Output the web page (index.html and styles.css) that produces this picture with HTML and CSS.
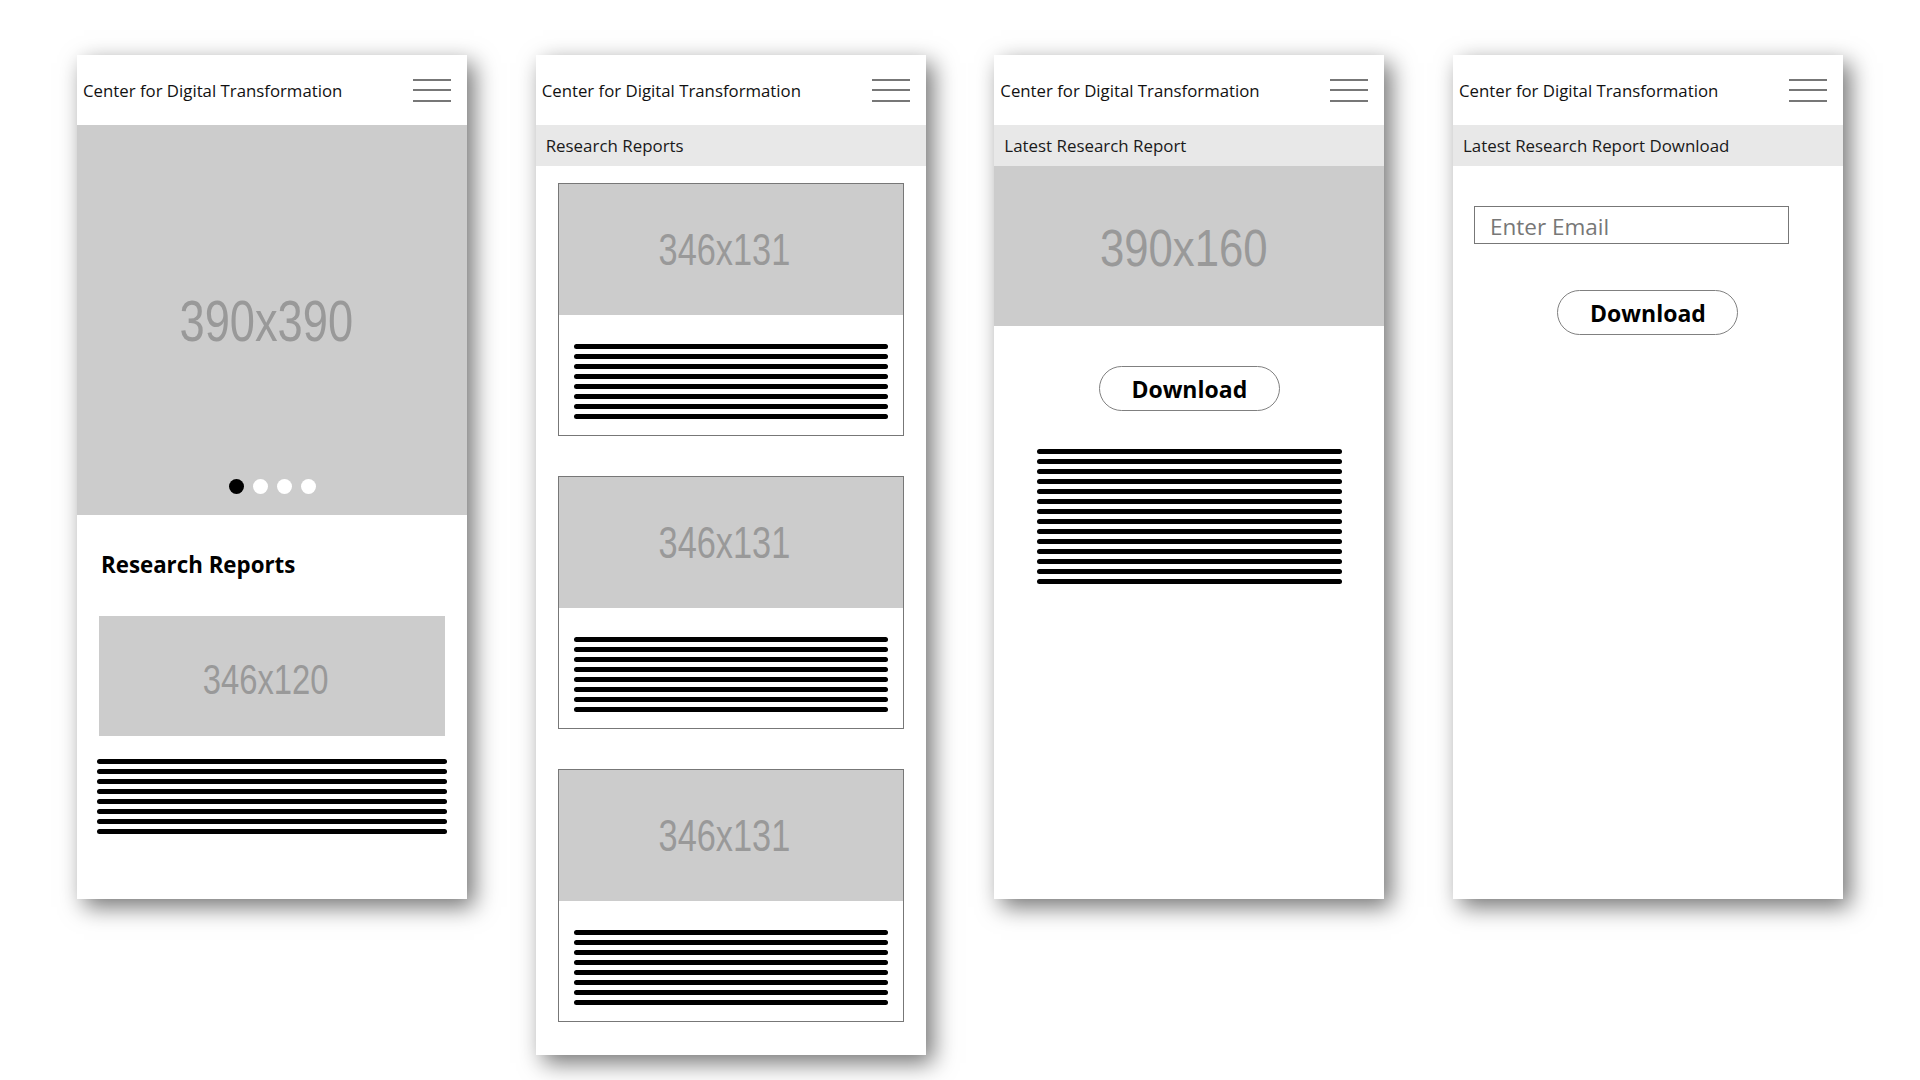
FILE: index.html
```html
<!DOCTYPE html>
<html lang="en">
<head>
    <meta charset="UTF-8">
    <meta name="viewport" content="width=device-width, initial-scale=1.0">
    <title>Center for Digital Transformation - Wireframes</title>
    <link rel="stylesheet" href="styles.css">
</head>
<body>
    <div class="board">

        <!-- home -->
        <div class="phone">
            <div class="topbar">
                <span class="brand">Center for Digital Transformation</span>
                <div class="menu"><span></span><span></span><span></span></div>
            </div>
            <div class="placeholder hero">
                <span class="ph-label size-xl">390x390</span>
                <div class="dots">
                    <span class="dot active"></span>
                    <span class="dot"></span>
                    <span class="dot"></span>
                    <span class="dot"></span>
                </div>
            </div>
            <h2 class="section-title">Research Reports</h2>
            <div class="placeholder teaser">
                <span class="ph-label size-s">346x120</span>
            </div>
            <div class="lines wide">
                <span></span><span></span><span></span><span></span>
                <span></span><span></span><span></span><span></span>
            </div>
        </div>

        <!-- report list -->
        <div class="phone tall">
            <div class="topbar">
                <span class="brand">Center for Digital Transformation</span>
                <div class="menu"><span></span><span></span><span></span></div>
            </div>
            <div class="crumb">Research Reports</div>
            <div class="report-list">
                <div class="report-card">
                    <div class="placeholder card-img"><span class="ph-label size-m">346x131</span></div>
                    <div class="lines">
                        <span></span><span></span><span></span><span></span>
                        <span></span><span></span><span></span><span></span>
                    </div>
                </div>
                <div class="report-card">
                    <div class="placeholder card-img"><span class="ph-label size-m">346x131</span></div>
                    <div class="lines">
                        <span></span><span></span><span></span><span></span>
                        <span></span><span></span><span></span><span></span>
                    </div>
                </div>
                <div class="report-card">
                    <div class="placeholder card-img"><span class="ph-label size-m">346x131</span></div>
                    <div class="lines">
                        <span></span><span></span><span></span><span></span>
                        <span></span><span></span><span></span><span></span>
                    </div>
                </div>
            </div>
        </div>

        <!-- latest report -->
        <div class="phone">
            <div class="topbar">
                <span class="brand">Center for Digital Transformation</span>
                <div class="menu"><span></span><span></span><span></span></div>
            </div>
            <div class="crumb">Latest Research Report</div>
            <div class="placeholder banner">
                <span class="ph-label size-l">390x160</span>
            </div>
            <button class="btn-download first">Download</button>
            <div class="lines summary">
                <span></span><span></span><span></span><span></span><span></span>
                <span></span><span></span><span></span><span></span><span></span>
                <span></span><span></span><span></span><span></span>
            </div>
        </div>

        <!-- download form -->
        <div class="phone">
            <div class="topbar">
                <span class="brand">Center for Digital Transformation</span>
                <div class="menu"><span></span><span></span><span></span></div>
            </div>
            <div class="crumb">Latest Research Report Download</div>
            <input class="email" type="text" placeholder="Enter Email">
            <button class="btn-download">Download</button>
        </div>

    </div>
</body>
</html>
```

FILE: styles.css
```css
body {
    margin: 0;
    background-color: #ffffff;
    font-family: "Open Sans", "Noto Sans", sans-serif;
    color: #111111;
}
.board {
    display: flex;
    align-items: flex-start;
    gap: 68.67px;
    padding: 55px 0 25px 77px;
}
.phone {
    width: 390px;
    height: 844px;
    flex-shrink: 0;
    display: flex;
    flex-direction: column;
    background-color: #ffffff;
    box-shadow: 7px 8px 22px rgba(0, 0, 0, 0.55);
    overflow: hidden;
}
.phone.tall {
    height: 1000px;
}
.topbar {
    height: 70px;
    flex-shrink: 0;
    display: flex;
    align-items: center;
    justify-content: space-between;
    padding: 0 16px 0 6px;
}
.brand {
    font-size: 16.8px;
    color: #111111;
}
.menu {
    width: 38px;
    display: flex;
    flex-direction: column;
    gap: 8.5px;
}
.menu span {
    display: block;
    height: 2px;
    background-color: #777777;
}
.crumb {
    height: 41px;
    flex-shrink: 0;
    display: flex;
    align-items: center;
    padding-left: 10px;
    background-color: #e8e8e8;
    font-size: 16.9px;
    color: #1a1a1a;
}
.placeholder {
    display: flex;
    align-items: center;
    justify-content: center;
    background-color: #cccccc;
    flex-shrink: 0;
}
.ph-label {
    display: inline-block;
    font-family: "Liberation Sans", Arial, sans-serif;
    color: #999999;
    transform: scaleX(0.78);
    margin-right: 12px;
}
.size-xl { font-size: 58px; }
.size-l { font-size: 52px; transform: scaleX(0.84); padding-top: 4px; }
.size-m { font-size: 44px; }
.size-s { font-size: 42px; padding-top: 7px; }
.hero {
    height: 390px;
    position: relative;
}
.dots {
    position: absolute;
    left: 0;
    right: 0;
    bottom: 21px;
    display: flex;
    justify-content: center;
    gap: 9px;
}
.dot {
    width: 15px;
    height: 15px;
    border-radius: 50%;
    background-color: #ffffff;
}
.dot.active {
    background-color: #000000;
}
.section-title {
    margin: 35px 0 0 24px;
    font-size: 22.3px;
    font-weight: 700;
    line-height: 30px;
    color: #000000;
}
.teaser {
    height: 120px;
    margin: 36px 22px 0;
}
.lines {
    display: flex;
    flex-direction: column;
    gap: 5px;
}
.lines span {
    display: block;
    height: 5px;
    border-radius: 3px;
    background-color: #000000;
}
.lines.wide {
    margin: 23px 20px 0;
}
.report-list {
    display: flex;
    flex-direction: column;
    gap: 40px;
    padding: 17px 22px 0;
}
.report-card {
    height: 253px;
    box-sizing: border-box;
    border: 1px solid #777777;
}
.card-img {
    height: 131px;
}
.report-card .lines {
    margin: 29px 15px 0;
}
.banner {
    height: 160px;
}
.btn-download {
    align-self: center;
    width: 181px;
    height: 45px;
    margin-top: 46px;
    border: 1px solid #808080;
    border-radius: 23px;
    background-color: #ffffff;
    font-family: "Open Sans", "Noto Sans", sans-serif;
    font-size: 23px;
    font-weight: 700;
    color: #000000;
}
.btn-download.first {
    margin-top: 40px;
}
.summary {
    width: 305px;
    align-self: center;
    margin-top: 38px;
}
.email {
    width: 315px;
    height: 38px;
    box-sizing: border-box;
    margin: 40px 0 0 21px;
    padding: 2px 0 0 15px;
    border: 1px solid #777777;
    font-family: "Open Sans", "Noto Sans", sans-serif;
    font-size: 22.5px;
    outline: none;
}
.email::placeholder {
    color: #777777;
}
```
